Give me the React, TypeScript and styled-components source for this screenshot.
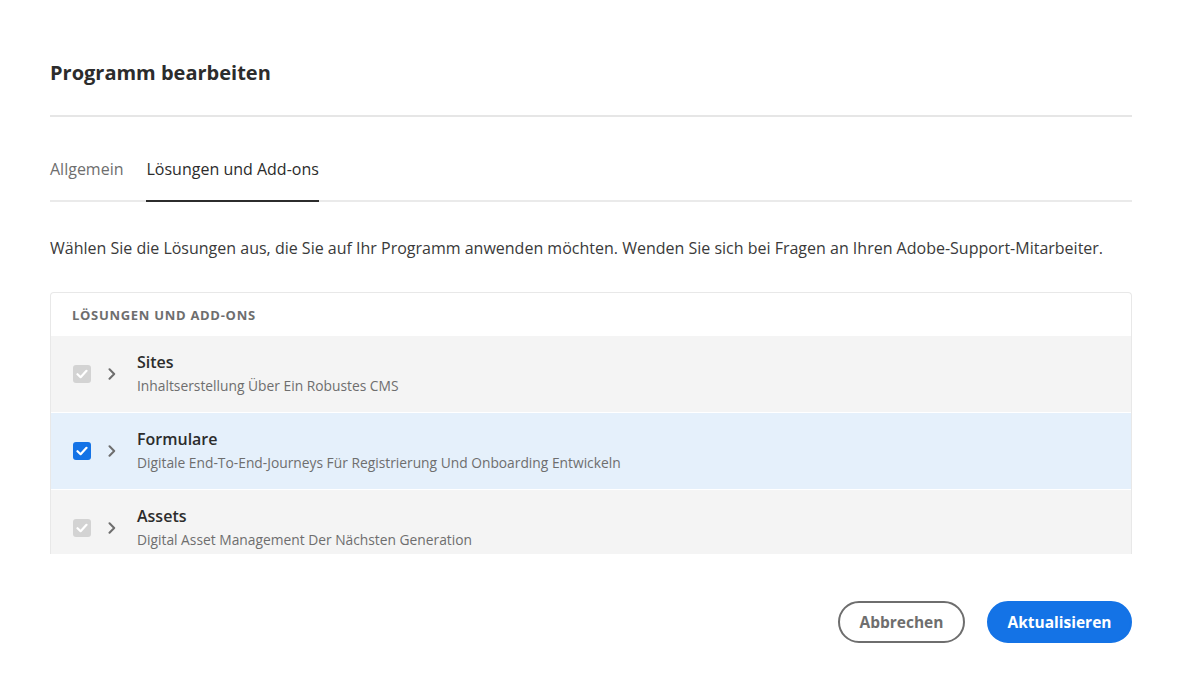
import React from "react";
import styled, { createGlobalStyle } from "styled-components";

const GlobalStyle = createGlobalStyle`
  html, body { margin: 0; padding: 0; background: #ffffff; }
  body { font-family: "Open Sans", "Noto Sans", sans-serif; color: #2c2c2c; }
  * { box-sizing: border-box; }
`;

const Dialog = styled.div`
  width: 1082px;
  margin-left: 50px;
  padding-top: 57px;
  display: flex;
  flex-direction: column;
`;

const Title = styled.h1`
  margin: 0;
  font-size: 20px;
  font-weight: 700;
  line-height: 32px;
  color: #2c2c2c;
  padding-bottom: 26px;
  border-bottom: 2px solid #e6e6e6;
`;

const TabBar = styled.div`
  display: flex;
  gap: 22px;
  margin-top: 36px;
  border-bottom: 2px solid #eaeaea;
`;

const Tab = styled.div<{ $active?: boolean }>`
  font-size: 16px;
  line-height: 32px;
  padding-bottom: 17px;
  color: ${(p) => (p.$active ? "#2c2c2c" : "#6e6e6e")};
  box-shadow: ${(p) => (p.$active ? "inset 0 -2px 0 #2c2c2c" : "none")};
  margin-bottom: -2px;
  padding-left: ${(p) => (p.$active ? "1px" : "0")};
`;

const Description = styled.p`
  margin: 33px 0 0;
  font-size: 16px;
  line-height: 26px;
  color: #3a3a3a;
  white-space: nowrap;
`;

const Table = styled.div`
  margin-top: 31px;
  border: 1px solid #e8e8e8;
  border-bottom: none;
  border-radius: 4px 4px 0 0;
  height: 262px;
  overflow: hidden;
  display: flex;
  flex-direction: column;
`;

const TableHeader = styled.div`
  flex: none;
  height: 43px;
  display: flex;
  align-items: center;
  padding-left: 21px;
  font-size: 13px;
  font-weight: 700;
  letter-spacing: 0.7px;
  color: #6e6e6e;
  text-transform: uppercase;
`;

const Row = styled.div<{ $selected?: boolean }>`
  flex: none;
  height: 76px;
  margin-bottom: 1px;
  background: ${(p) => (p.$selected ? "#e5f0fb" : "#f4f4f4")};
  display: flex;
  align-items: center;
  padding-left: 22px;
`;

const CheckBox = styled.div<{ $checked?: boolean }>`
  width: 18px;
  height: 18px;
  border-radius: 3px;
  background: ${(p) => (p.$checked ? "#1473e6" : "#d3d3d3")};
  display: flex;
  align-items: center;
  justify-content: center;
`;

const Chevron = styled.div`
  width: 10px;
  margin-left: 17px;
  display: flex;
  align-items: center;
`;

const RowText = styled.div`
  margin-left: 19px;
  display: flex;
  flex-direction: column;
`;

const RowTitle = styled.div`
  font-size: 16px;
  font-weight: 600;
  line-height: 24px;
  color: #2c2c2c;
`;

const RowSub = styled.div`
  font-size: 13.8px;
  line-height: 24px;
  color: #6e6e6e;
`;

const Footer = styled.div`
  display: flex;
  justify-content: flex-end;
  gap: 22px;
  margin-top: 47px;
`;

const Button = styled.button<{ $primary?: boolean }>`
  height: 42px;
  border-radius: 21px;
  padding: 0 ${(p) => (p.$primary ? "18.5px" : "19.5px")};
  font-family: "Open Sans", "Noto Sans", sans-serif;
  font-size: 15.5px;
  font-weight: 700;
  cursor: pointer;
  border: 2px solid ${(p) => (p.$primary ? "#1473e6" : "#6e6e6e")};
  background: ${(p) => (p.$primary ? "#1473e6" : "#ffffff")};
  color: ${(p) => (p.$primary ? "#ffffff" : "#6e6e6e")};
`;

const Check = () => (
  <svg width="12" height="10" viewBox="0 0 12 10">
    <path d="M1.5 5.2 L4.6 8.2 L10.5 1.8" fill="none" stroke="#ffffff" strokeWidth="2.2" strokeLinecap="round" strokeLinejoin="round" />
  </svg>
);

const ChevronIcon = () => (
  <svg width="8" height="12" viewBox="0 0 8 12">
    <path d="M1.5 1.2 L6.2 6 L1.5 10.8" fill="none" stroke="#6e6e6e" strokeWidth="2" strokeLinecap="round" strokeLinejoin="round" />
  </svg>
);

const rows = [
  { title: "Sites", sub: "Inhaltserstellung Über Ein Robustes CMS", selected: false },
  { title: "Formulare", sub: "Digitale End-To-End-Journeys Für Registrierung Und Onboarding Entwickeln", selected: true },
  { title: "Assets", sub: "Digital Asset Management Der Nächsten Generation", selected: false },
];

export default function App() {
  return (
    <>
      <GlobalStyle />
      <Dialog>
        <Title>Programm bearbeiten</Title>
        <TabBar>
          <Tab>Allgemein</Tab>
          <Tab $active>Lösungen und Add-ons</Tab>
        </TabBar>
        <Description>
          Wählen Sie die Lösungen aus, die Sie auf Ihr Programm anwenden möchten. Wenden Sie sich bei Fragen an Ihren Adobe-Support-Mitarbeiter.
        </Description>
        <Table>
          <TableHeader>Lösungen und Add-ons</TableHeader>
          {rows.map((r) => (
            <Row key={r.title} $selected={r.selected}>
              <CheckBox $checked={r.selected}>
                <Check />
              </CheckBox>
              <Chevron>
                <ChevronIcon />
              </Chevron>
              <RowText>
                <RowTitle>{r.title}</RowTitle>
                <RowSub>{r.sub}</RowSub>
              </RowText>
            </Row>
          ))}
        </Table>
        <Footer>
          <Button>Abbrechen</Button>
          <Button $primary>Aktualisieren</Button>
        </Footer>
      </Dialog>
    </>
  );
}
